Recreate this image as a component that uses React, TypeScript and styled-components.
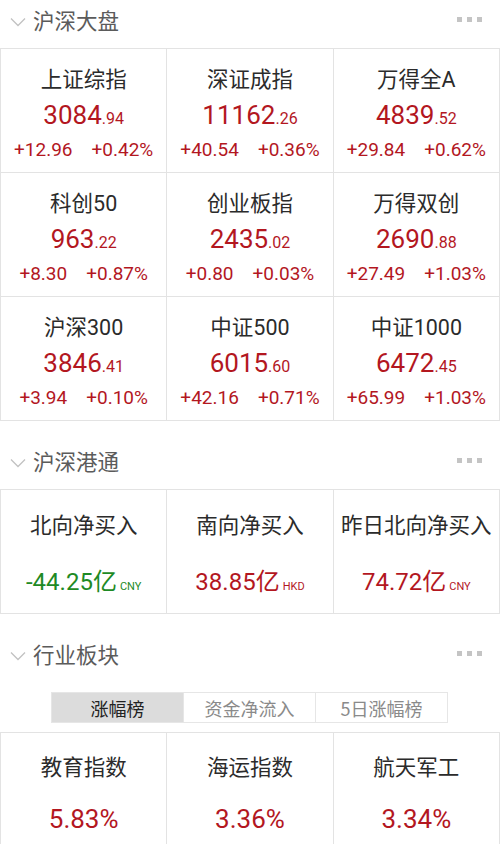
import React from 'react';
import styled, { createGlobalStyle } from 'styled-components';

const RED = '#b3171f';
const GREEN = '#1e8a25';
const LINE = '#e3e3e3';

const GlobalStyle = createGlobalStyle`
  body {
    margin: 0;
    background: #fff;
    font-family: Roboto, "Noto Sans CJK SC", sans-serif;
  }
`;

const Page = styled.div`
  width: 500px;
  height: 844px;
  overflow: hidden;
  background: #fff;
`;

const Section = styled.section`
  & + & {
    margin-top: 20px;
  }
`;

const Header = styled.div`
  height: 48px;
  display: flex;
  align-items: flex-start;
  padding: 6px 18px 0 10px;
  box-sizing: border-box;
`;

const Chevron = styled.svg`
  width: 16px;
  height: 10px;
  margin-top: 11px;
  margin-right: 7px;
  flex-shrink: 0;
`;

const Title = styled.h2`
  margin: 0;
  flex: 1;
  font-size: 21.5px;
  line-height: 28px;
  font-weight: 400;
  color: #5b5b5b;
  font-family: "Noto Sans CJK SC", sans-serif;
`;

const Dots = styled.div`
  display: flex;
  gap: 5px;
  margin-top: 11px;
`;

const Dot = styled.span`
  width: 5px;
  height: 5px;
  background: #c4c4c4;
`;

const Grid = styled.div`
  display: grid;
  grid-template-columns: repeat(3, 1fr);
  border-top: 1px solid ${LINE};
  border-left: 1px solid ${LINE};
`;

const Cell = styled.div<{ $top: number }>`
  height: 124px;
  padding-top: ${p => p.$top}px;
  box-sizing: border-box;
  border-right: 1px solid ${LINE};
  border-bottom: 1px solid ${LINE};
  display: flex;
  flex-direction: column;
  align-items: center;
`;

const Name = styled.div<{ $lh: number }>`
  font-size: 21.5px;
  line-height: ${p => p.$lh}px;
  color: #2b2b2b;
  white-space: nowrap;
`;

const Value = styled.div<{ $color?: string; $lh: number; $gap?: number; $size?: number }>`
  font-size: ${p => p.$size || 26}px;
  line-height: ${p => p.$lh}px;
  margin-top: ${p => p.$gap || 0}px;
  color: ${p => p.$color || RED};
  white-space: nowrap;
`;

const Decimals = styled.span`
  font-size: 16px;
`;

const Unit = styled.span`
  font-size: 11px;
  margin-left: 3px;
`;

const Changes = styled.div`
  display: flex;
  gap: 19px;
  font-size: 19px;
  line-height: 22px;
  color: ${RED};
  white-space: nowrap;
`;

const Tabs = styled.div`
  display: flex;
  margin: 10px 0 9px 51px;
  width: 397px;
  height: 31px;
  border: 1px solid #e6e6e6;
  box-sizing: border-box;
`;

const Tab = styled.div<{ $active?: boolean }>`
  flex: 1;
  display: flex;
  align-items: center;
  justify-content: center;
  font-size: 18px;
  font-family: "Noto Sans CJK SC", sans-serif;
  color: ${p => (p.$active ? '#222' : '#8a8a8a')};
  background: ${p => (p.$active ? '#dcdcdc' : '#fff')};
  & + & {
    border-left: 1px solid #e6e6e6;
  }
`;

const SectionHeader: React.FC<{ title: string }> = ({ title }) => (
  <Header>
    <Chevron viewBox="0 0 16 10">
      <polyline points="1,1.5 8,8.5 15,1.5" fill="none" stroke="#c2c2c2" strokeWidth="1.3" />
    </Chevron>
    <Title>{title}</Title>
    <Dots>
      <Dot />
      <Dot />
      <Dot />
    </Dots>
  </Header>
);

const indices = [
  ['上证综指', '3084', '94', '+12.96', '+0.42%'],
  ['深证成指', '11162', '26', '+40.54', '+0.36%'],
  ['万得全A', '4839', '52', '+29.84', '+0.62%'],
  ['科创50', '963', '22', '+8.30', '+0.87%'],
  ['创业板指', '2435', '02', '+0.80', '+0.03%'],
  ['万得双创', '2690', '88', '+27.49', '+1.03%'],
  ['沪深300', '3846', '41', '+3.94', '+0.10%'],
  ['中证500', '6015', '60', '+42.16', '+0.71%'],
  ['中证1000', '6472', '45', '+65.99', '+1.03%'],
];

const flows = [
  { name: '北向净买入', value: '-44.25亿', unit: 'CNY', color: GREEN },
  { name: '南向净买入', value: '38.85亿', unit: 'HKD', color: RED },
  { name: '昨日北向净买入', value: '74.72亿', unit: 'CNY', color: RED },
];

const sectors = [
  ['教育指数', '5.83%'],
  ['海运指数', '3.36%'],
  ['航天军工', '3.34%'],
];

export default function App() {
  return (
    <Page>
      <GlobalStyle />
      <Section>
        <SectionHeader title="沪深大盘" />
        <Grid>
          {indices.map(([name, int, dec, chg, pct]) => (
            <Cell key={name} $top={16}>
              <Name $lh={30}>{name}</Name>
              <Value $lh={40}>
                {int}
                <Decimals>.{dec}</Decimals>
              </Value>
              <Changes>
                <span>{chg}</span>
                <span>{pct}</span>
              </Changes>
            </Cell>
          ))}
        </Grid>
      </Section>

      <Section>
        <SectionHeader title="沪深港通" />
        <Grid>
          {flows.map(f => (
            <Cell key={f.name} $top={20}>
              <Name $lh={32}>{f.name}</Name>
              <Value $lh={30} $gap={25} $size={24} $color={f.color}>
                {f.value}
                <Unit>{f.unit}</Unit>
              </Value>
            </Cell>
          ))}
        </Grid>
      </Section>

      <Section>
        <SectionHeader title="行业板块" />
        <Tabs>
          <Tab $active>涨幅榜</Tab>
          <Tab>资金净流入</Tab>
          <Tab>5日涨幅榜</Tab>
        </Tabs>
        <Grid>
          {sectors.map(([name, pct]) => (
            <Cell key={name} $top={19}>
              <Name $lh={32}>{name}</Name>
              <Value $lh={30} $gap={20}>{pct}</Value>
            </Cell>
          ))}
        </Grid>
      </Section>
    </Page>
  );
}
